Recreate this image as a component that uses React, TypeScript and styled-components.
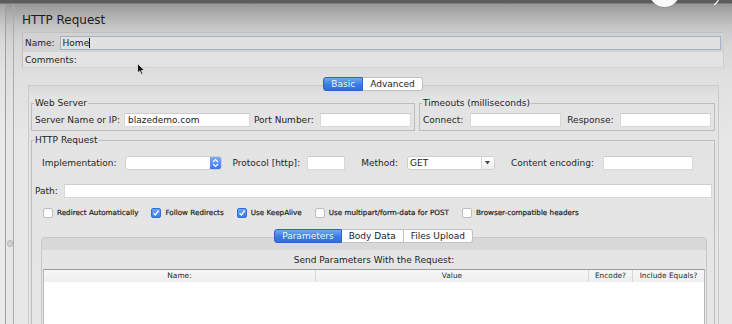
import React from 'react';
import styled, {createGlobalStyle, css} from 'styled-components';

const GlobalStyle = createGlobalStyle`
  html, body {
    margin: 0;
    padding: 0;
  }
  body {
    width: 732px;
    height: 324px;
    overflow: hidden;
    font-family: "DejaVu Sans", "Liberation Sans", sans-serif;
    color: #262626;
  }
`

const Screen = styled.div`
  position: relative;
  display: flex;
  flex-direction: column;
  width: 732px;
  height: 324px;
  overflow: hidden;
  background: linear-gradient(#8e8e8e 0px, #a9a9a9 12px, #c4c4c4 26px, #d6d6d6 44px, #e0e0e0 80px, #e7e7e7 140px);
`

const TopBar = styled.div`
  flex: none;
  height: 3px;
  background: #5c5c5c;
  border-bottom: 1px solid #7c7c7c;
`

const Body = styled.div`
  display: flex;
  flex: 1;
  min-height: 0;
`

const TreeEdge = styled.div`
  width: 5px;
  border-right: 1px solid #a0a0a0;
  background: rgba(255, 255, 255, 0.12);
`

const Divider = styled.div`
  box-sizing: border-box;
  width: 8px;
  border-right: 1px solid #acacac;
  display: flex;
  flex-direction: column;
  align-items: center;
  padding-top: 236px;
`

const Grip = styled.div`
  width: 4px;
  height: 5px;
  border-radius: 50%;
  background: #d0d0d0;
  border: 1px solid #bcbcbc;
`

const Main = styled.div`
  flex: 1;
  min-width: 0;
  display: flex;
  flex-direction: column;
`

const Title = styled.div`
  height: 24px;
  padding: 4px 0 0 8px;
  line-height: 24px;
  font-size: 12px;
  color: #1c1c1c;
`

const NameBox = styled.div`
  margin: 0 8px;
  border: 1px solid #c0c0c0;
  border-right-color: #cdcdcd;
  border-bottom-color: #d2d2d2;
  display: flex;
  flex-direction: column;
`

const NameRow = styled.div`
  display: flex;
  align-items: center;
  height: 19px;
  padding: 0 2px;
  background: #d3d3d3;
`

const CommentsRow = styled.div`
  display: flex;
  align-items: center;
  height: 15px;
  padding: 0 2px;
  background: #e3e3e3;
`

const NameInput = styled.div`
  box-sizing: border-box;
  flex: 1;
  height: 14px;
  margin-left: 5px;
  padding: 0 2px;
  border: 1px solid #9fb2c8;
  background: #e1e1e1;
  font-size: 9px;
  line-height: 12px;
  color: #1a1a1a;
  display: flex;
  align-items: center;
`

const Caret = styled.span`
  width: 1px;
  height: 10px;
  background: #111;
`

const Label = styled.span<{ $ml?: number }>`
  flex: none;
  font-size: 9px;
  line-height: 12px;
  color: #262626;
  white-space: nowrap;
  margin-left: ${p => p.$ml ?? 0}px;
`

const TabBar = styled.div<{ $mt: number; $overlap: number }>`
  position: relative;
  z-index: 1;
  display: flex;
  justify-content: center;
  margin-top: ${p => p.$mt}px;
  margin-bottom: -${p => p.$overlap}px;
`

const Tab = styled.div<{ $active?: boolean }>`
  box-sizing: border-box;
  height: 14px;
  padding: 0 7px;
  font-size: 9px;
  line-height: 12px;
  border: 1px solid #c2c2c2;
  border-left-width: 0;
  background: #fdfdfd;
  color: #1e1e1e;

  &:first-child {
    border-left-width: 1px;
    border-radius: 3px 0 0 3px;
  }
  &:last-child {
    border-radius: 0 3px 3px 0;
  }

  ${p => p.$active && css`
    background: linear-gradient(#73a7f3, #3a7ce6 55%, #2f6fdc);
    border-color: #2d63c6;
    color: #eef4ff;
  `}
`

const Panel = styled.div`
  box-sizing: border-box;
  flex: 1;
  min-height: 0;
  margin: 0 13px 0 14px;
  padding: 12px 3px 0 2px;
  border: 1px solid #cbcbcb;
  border-bottom: none;
  background: linear-gradient(#d9d9d9, #e3e3e3 12px, #e6e6e6);
  display: flex;
  flex-direction: column;
`

const GroupsRow = styled.div`
  display: flex;
  gap: 4px;
`

const Group = styled.fieldset<{ $w?: number; $grow?: boolean }>`
  box-sizing: border-box;
  margin: 0;
  min-width: 0;
  padding: 0 2px 3px 3px;
  border: 1px solid #bdbdbd;
  ${p => p.$w ? css`width: ${p.$w}px;` : css`flex: 1;`}
  ${p => p.$grow && css`
    flex: 1;
    min-height: 0;
    margin-top: 4px;
    padding-bottom: 0;
    border-bottom: none;
    display: flex;
    flex-direction: column;
  `}
`

const Legend = styled.legend`
  margin-left: -1px;
  padding: 0 1px;
  font-size: 9px;
  line-height: 10px;
  color: #1e1e1e;
`

const FieldRow = styled.div<{ $mt: number; $pl?: number }>`
  display: flex;
  align-items: center;
  height: 14px;
  margin-top: ${p => p.$mt}px;
  padding-left: ${p => p.$pl ?? 0}px;
`

const TextBox = styled.div<{ $w?: number; $ml?: number }>`
  box-sizing: border-box;
  height: 14px;
  ${p => p.$w ? css`width: ${p.$w}px; flex: none;` : css`flex: 1;`}
  margin-left: ${p => p.$ml ?? 0}px;
  padding: 0 3px;
  background: #fff;
  border: 1px solid #d8d8d8;
  border-top-color: #cbcbcb;
  font-size: 9px;
  line-height: 12px;
  color: #1c1c1c;
`

const SelectBox = styled.div<{ $w: number; $ml: number }>`
  box-sizing: border-box;
  display: flex;
  width: ${p => p.$w}px;
  height: 14px;
  margin-left: ${p => p.$ml}px;
  background: #fff;
  border: 1px solid #cfcfcf;
  border-radius: 3px;
  overflow: hidden;
  font-size: 9px;
  line-height: 12px;
  color: #1c1c1c;
`

const SelectText = styled.div`
  flex: 1;
  padding: 0 2px;
`

const Stepper = styled.div`
  width: 11px;
  background: linear-gradient(#7aaef5, #3878e4);
  display: flex;
  align-items: center;
  justify-content: center;
`

const DropArrow = styled.div`
  width: 12px;
  border-left: 1px solid #d4d4d4;
  background: linear-gradient(#ffffff, #eeeeee);
  display: flex;
  align-items: center;
  justify-content: center;
`

const CheckRow = styled.div`
  display: flex;
  align-items: center;
  gap: 13px;
  height: 10px;
  margin-top: 10px;
  padding-left: 8px;
`

const CheckItem = styled.div`
  display: flex;
  align-items: center;
  gap: 4px;
`

const Box = styled.div<{ $checked?: boolean }>`
  box-sizing: border-box;
  width: 10px;
  height: 10px;
  border-radius: 2px;
  border: 1px solid #bdbdbd;
  background: #fff;
  display: flex;
  align-items: center;
  justify-content: center;
  ${p => p.$checked && css`
    border-color: #2f6fd8;
    background: linear-gradient(#6ea5f4, #3a7ce6);
  `}
`

const CheckLabel = styled.span`
  font-size: 7.2px;
  line-height: 10px;
  color: #1e1e1e;
  white-space: nowrap;
  -webkit-text-stroke: 0.2px #1e1e1e;
`

const SubPanel = styled.div`
  flex: 1;
  min-height: 0;
  margin: 0 5px 0 6px;
  border: 1px solid #c8c8c8;
  border-bottom: none;
  border-radius: 4px 4px 0 0;
  background: #e5e5e5;
  display: flex;
  flex-direction: column;
`

const SubPanelBand = styled.div`
  height: 12px;
  border-radius: 4px 4px 0 0;
  background: #d8d8d8;
`

const Caption = styled.div`
  height: 19px;
  line-height: 20px;
  text-align: center;
  font-size: 9px;
  color: #1e1e1e;
`

const Table = styled.div`
  flex: 1;
  margin: 0 1px;
  border-top: 1px solid #9c9c9c;
  border-left: 1px solid #b8b8b8;
  border-right: 1px solid #b8b8b8;
  background: #fff;
`

const HeadRow = styled.div`
  display: grid;
  grid-template-columns: 272px 273px 44px 1fr;
  height: 12px;
  background: linear-gradient(#f6f6f6, #efefef);
`

const HeadCell = styled.div`
  font-size: 7.4px;
  line-height: 12px;
  text-align: center;
  color: #2a2a2a;
  white-space: nowrap;
  border-right: 1px solid #d6d6d6;

  &:last-child {
    border-right: none;
  }
`

const Bubble = styled.div`
  position: absolute;
  left: 649px;
  top: -24px;
  width: 31px;
  height: 31px;
  border-radius: 50%;
  background: #fafafa;
  box-shadow: 0 0 1px rgba(0, 0, 0, 0.4);
`

const Overlay = styled.svg<{ $x: number; $y: number }>`
  position: absolute;
  left: ${p => p.$x}px;
  top: ${p => p.$y}px;
`

const StepperIcon = () => (
  <svg width="7" height="10" viewBox="0 0 7 10">
    <path d="M1 4 L3.5 1.5 L6 4 M1 6 L3.5 8.5 L6 6" stroke="#fff" strokeWidth="1.1" fill="none"/>
  </svg>
)

const TriangleIcon = () => (
  <svg width="5" height="4" viewBox="0 0 5 4">
    <path d="M0 0 H5 L2.5 3.5 Z" fill="#444"/>
  </svg>
)

const CheckIcon = () => (
  <svg width="8" height="8" viewBox="0 0 8 8">
    <path d="M1.5 4.2 L3.3 6 L6.6 1.6" stroke="#fff" strokeWidth="1.4" fill="none"/>
  </svg>
)

const options = [
  {label: 'Redirect Automatically', checked: false},
  {label: 'Follow Redirects', checked: true},
  {label: 'Use KeepAlive', checked: true},
  {label: 'Use multipart/form-data for POST', checked: false},
  {label: 'Browser-compatible headers', checked: false},
]

const columns = ['Name:', 'Value', 'Encode?', 'Include Equals?']

function App() {
  return (
    <Screen>
      <GlobalStyle/>
      <TopBar/>
      <Body>
        <TreeEdge/>
        <Divider><Grip/></Divider>
        <Main>
          <Title>HTTP Request</Title>
          <NameBox>
            <NameRow>
              <Label>Name:</Label>
              <NameInput>Home<Caret/></NameInput>
            </NameRow>
            <CommentsRow>
              <Label>Comments:</Label>
            </CommentsRow>
          </NameBox>

          <TabBar $mt={9} $overlap={6}>
            <Tab $active>Basic</Tab>
            <Tab>Advanced</Tab>
          </TabBar>

          <Panel>
            <GroupsRow>
              <Group $w={384}>
                <Legend>Web Server</Legend>
                <FieldRow $mt={5}>
                  <Label>Server Name or IP:</Label>
                  <TextBox $w={126} $ml={4}>blazedemo.com</TextBox>
                  <Label $ml={4}>Port Number:</Label>
                  <TextBox $w={91} $ml={6}/>
                </FieldRow>
              </Group>
              <Group>
                <Legend>Timeouts (milliseconds)</Legend>
                <FieldRow $mt={5}>
                  <Label>Connect:</Label>
                  <TextBox $w={91} $ml={7}/>
                  <Label $ml={6}>Response:</Label>
                  <TextBox $w={91} $ml={6}/>
                </FieldRow>
              </Group>
            </GroupsRow>

            <Group $grow>
              <Legend>HTTP Request</Legend>
              <FieldRow $mt={11} $pl={7}>
                <Label>Implementation:</Label>
                <SelectBox $w={97} $ml={8}>
                  <SelectText/>
                  <Stepper><StepperIcon/></Stepper>
                </SelectBox>
                <Label $ml={11}>Protocol [http]:</Label>
                <TextBox $w={38} $ml={7}/>
                <Label $ml={16}>Method:</Label>
                <SelectBox $w={88} $ml={9}>
                  <SelectText>GET</SelectText>
                  <DropArrow><TriangleIcon/></DropArrow>
                </SelectBox>
                <Label $ml={16}>Content encoding:</Label>
                <TextBox $w={90} $ml={9}/>
              </FieldRow>
              <FieldRow $mt={14}>
                <Label>Path:</Label>
                <TextBox $ml={6}/>
              </FieldRow>
              <CheckRow>
                {options.map(o => (
                  <CheckItem key={o.label}>
                    <Box $checked={o.checked}>{o.checked && <CheckIcon/>}</Box>
                    <CheckLabel>{o.label}</CheckLabel>
                  </CheckItem>
                ))}
              </CheckRow>

              <TabBar $mt={11} $overlap={6}>
                <Tab $active>Parameters</Tab>
                <Tab>Body Data</Tab>
                <Tab>Files Upload</Tab>
              </TabBar>
              <SubPanel>
                <SubPanelBand/>
                <Caption>Send Parameters With the Request:</Caption>
                <Table>
                  <HeadRow>
                    {columns.map(c => <HeadCell key={c}>{c}</HeadCell>)}
                  </HeadRow>
                </Table>
              </SubPanel>
            </Group>
          </Panel>
        </Main>
      </Body>

      <Bubble/>
      <Overlay $x={712} $y={0} width="8" height="8" viewBox="0 0 8 8">
        <path d="M6.5 0 Q5 3 2 5" stroke="#f4f4f4" strokeWidth="1.3" fill="none"/>
      </Overlay>
      <Overlay $x={137} $y={63} width="9" height="13" viewBox="0 0 9 13">
        <path d="M0.5 0.5 L0.5 10 L2.8 7.9 L4.4 11.6 L5.9 11 L4.4 7.4 L7.6 7.4 Z" fill="#111" stroke="#fff" strokeWidth="0.7"/>
      </Overlay>
    </Screen>
  );
}

export default App;
